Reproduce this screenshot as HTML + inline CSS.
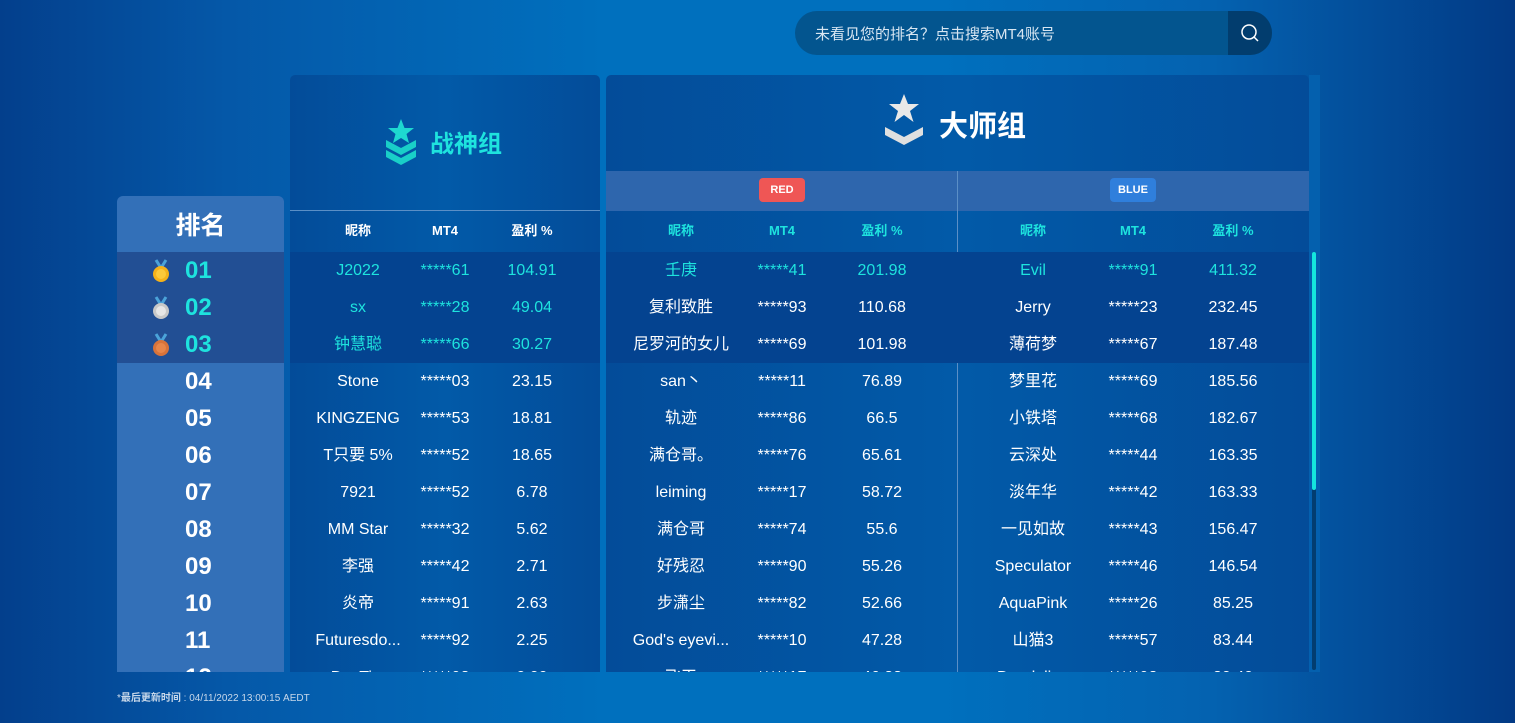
<!DOCTYPE html>
<html><head><meta charset="utf-8"><style>
*{margin:0;padding:0;box-sizing:border-box}
body{width:1515px;height:723px;overflow:hidden;position:relative;font-family:"Liberation Sans","Noto Sans CJK SC",sans-serif;color:#fff;
background:linear-gradient(90deg,#033f8c 0%,#0558a8 15%,#0070be 40%,#0070be 62%,#0462b0 80%,#023a85 100%)}
.abs{position:absolute}
.search{left:795px;top:11px;width:477px;height:44px;border-radius:22px;background:#03558f;overflow:hidden}
.search span{position:absolute;left:20px;top:12px;font-size:15px;color:#d8e6f2}
.search .btn{position:absolute;right:0;top:0;width:44px;height:44px;background:#023d6e}
.panel{background:linear-gradient(90deg,#034c99,#025aa8 50%,#034c99)}
.rank{left:117px;top:196px;width:167px;height:476px;background:#3370b8;border-radius:6px 6px 0 0;overflow:hidden}
.rank .h{height:56px;line-height:60px;text-align:center;font-size:25px;font-weight:bold}
.rank .r{height:37px;line-height:37px;font-size:24px;font-weight:bold;position:relative}
.rank .r b{position:absolute;left:68px}
.rank .top{background:#224f94;color:#1ee3de}
.rows{position:absolute;left:0;top:252px;right:0;height:420px;overflow:hidden}
.row{height:37px;position:relative;font-size:16px}
.row.top{background:#044390}
.row span{position:absolute;top:0;line-height:37px;transform:translateX(-50%);white-space:nowrap}
.t span{color:#1ee3de}
.hd{position:absolute;font-size:13px;font-weight:bold;transform:translateX(-50%);top:146px;height:20px;line-height:20px;white-space:nowrap}
.badge{position:absolute;top:179px;height:24px;line-height:24px;border-radius:4px;font-size:11px;font-weight:bold;text-align:center}
</style></head><body>
<div class="abs search"><span>未看见您的排名？点击搜索MT4账号</span><div class="btn"><svg width="44" height="44"><circle cx="21" cy="21" r="7" fill="none" stroke="#fff" stroke-width="1.5"/><line x1="26" y1="26" x2="30" y2="30" stroke="#fff" stroke-width="1.5"/></svg></div></div>

<div class="abs rank">
<div class="h">排名</div>
<div class="r top"><svg class="abs" style="left:33px;top:7px" width="22" height="26"><path d="M6 1l5 8 5-8" stroke="#4ba3d9" stroke-width="3" fill="none"/><circle cx="11" cy="15" r="8" fill="#f5b21a"/><circle cx="11" cy="15" r="5" fill="#fcc93a"/></svg><b>01</b></div>
<div class="r top"><svg class="abs" style="left:33px;top:7px" width="22" height="26"><path d="M6 1l5 8 5-8" stroke="#4ba3d9" stroke-width="3" fill="none"/><circle cx="11" cy="15" r="8" fill="#c8c8c8"/><circle cx="11" cy="15" r="5" fill="#e6e6e6"/></svg><b>02</b></div>
<div class="r top"><svg class="abs" style="left:33px;top:7px" width="22" height="26"><path d="M6 1l5 8 5-8" stroke="#4ba3d9" stroke-width="3" fill="none"/><circle cx="11" cy="15" r="8" fill="#d8733a"/><circle cx="11" cy="15" r="5" fill="#e8864a"/></svg><b>03</b></div>
<div class="r"><b>04</b></div><div class="r"><b>05</b></div><div class="r"><b>06</b></div><div class="r"><b>07</b></div><div class="r"><b>08</b></div><div class="r"><b>09</b></div><div class="r"><b>10</b></div><div class="r"><b>11</b></div><div class="r"><b>12</b></div>
</div>

<div class="abs panel" style="left:290px;top:75px;width:310px;height:597px;border-radius:5px 5px 0 0;overflow:hidden">
<svg class="abs" style="left:94px;top:43px" width="34" height="52"><polygon points="17,1 20.5,10 30,10 22.5,16 25,25 17,20 9,25 11.5,16 4,10 13.5,10" fill="#1ed8d0"/><path d="M2 22l15 8 15-8v7l-15 8-15-8z M2 32l15 8 15-8v7l-15 8-15-8z" fill="#19cfc8"/></svg>
<div class="abs" style="left:140px;top:54px;font-size:24px;line-height:32px;font-weight:bold;color:#1ee3de">战神组</div>
<div class="abs" style="left:0;top:135px;width:310px;height:1px;background:#5b8fc6"></div>
<div class="hd" style="left:68px">昵称</div><div class="hd" style="left:155px">MT4</div><div class="hd" style="left:242px">盈利 %</div>
<div class="rows" style="top:177px">
<div class="row top t"><span style="left:68px">J2022</span><span style="left:155px">*****61</span><span style="left:242px">104.91</span></div>
<div class="row top t"><span style="left:68px">sx</span><span style="left:155px">*****28</span><span style="left:242px">49.04</span></div>
<div class="row top t"><span style="left:68px">钟慧聪</span><span style="left:155px">*****66</span><span style="left:242px">30.27</span></div>
<div class="row"><span style="left:68px">Stone</span><span style="left:155px">*****03</span><span style="left:242px">23.15</span></div>
<div class="row"><span style="left:68px">KINGZENG</span><span style="left:155px">*****53</span><span style="left:242px">18.81</span></div>
<div class="row"><span style="left:68px">T只要 5%</span><span style="left:155px">*****52</span><span style="left:242px">18.65</span></div>
<div class="row"><span style="left:68px">7921</span><span style="left:155px">*****52</span><span style="left:242px">6.78</span></div>
<div class="row"><span style="left:68px">MM Star</span><span style="left:155px">*****32</span><span style="left:242px">5.62</span></div>
<div class="row"><span style="left:68px">李强</span><span style="left:155px">*****42</span><span style="left:242px">2.71</span></div>
<div class="row"><span style="left:68px">炎帝</span><span style="left:155px">*****91</span><span style="left:242px">2.63</span></div>
<div class="row"><span style="left:68px">Futuresdo...</span><span style="left:155px">*****92</span><span style="left:242px">2.25</span></div>
<div class="row"><span style="left:68px">DocTi...</span><span style="left:155px">*****98</span><span style="left:242px">0.00</span></div>
</div>
</div>

<div class="abs" style="left:1309px;top:75px;width:11px;height:597px;background:#0460ae"></div>
<div class="abs panel" style="left:606px;top:75px;width:703px;height:597px;border-radius:5px 5px 0 0;overflow:hidden">
<svg class="abs" style="left:278px;top:18px" width="40" height="54"><polygon points="20,1 24,11 35,11 26,18 29.5,29 20,22 10.5,29 14,18 5,11 16,11" fill="#e8e8e8"/><path d="M1 34l19 10 19-10v8l-19 10-19-10z" fill="#e0e0e0"/></svg>
<div class="abs" style="left:333px;top:28px;font-size:29px;font-weight:bold">大师组</div>
<div class="abs" style="left:0;top:96px;width:703px;height:40px;background:#2e66ad"></div>
<div class="abs" style="left:351px;top:96px;width:1px;height:501px;background:#5b8fc6"></div>
<div class="badge" style="left:153px;top:103px;width:46px;background:#ef5655">RED</div>
<div class="badge" style="left:504px;top:103px;width:46px;background:#2f7fdc">BLUE</div>
<div class="hd" style="left:75px;color:#1ee3de">昵称</div><div class="hd" style="left:176px;color:#1ee3de">MT4</div><div class="hd" style="left:276px;color:#1ee3de">盈利 %</div>
<div class="hd" style="left:427px;color:#1ee3de">昵称</div><div class="hd" style="left:527px;color:#1ee3de">MT4</div><div class="hd" style="left:627px;color:#1ee3de">盈利 %</div>
<div class="rows" style="top:177px;width:703px">
<div class="row top"><span style="left:75px;color:#1ee3de">壬庚</span><span style="left:176px;color:#1ee3de">*****41</span><span style="left:276px;color:#1ee3de">201.98</span><span style="left:427px;color:#1ee3de">Evil</span><span style="left:527px;color:#1ee3de">*****91</span><span style="left:627px;color:#1ee3de">411.32</span></div>
<div class="row top"><span style="left:75px">复利致胜</span><span style="left:176px">*****93</span><span style="left:276px">110.68</span><span style="left:427px">Jerry</span><span style="left:527px">*****23</span><span style="left:627px">232.45</span></div>
<div class="row top"><span style="left:75px">尼罗河的女儿</span><span style="left:176px">*****69</span><span style="left:276px">101.98</span><span style="left:427px">薄荷梦</span><span style="left:527px">*****67</span><span style="left:627px">187.48</span></div>
<div class="row"><span style="left:75px">san丶</span><span style="left:176px">*****11</span><span style="left:276px">76.89</span><span style="left:427px">梦里花</span><span style="left:527px">*****69</span><span style="left:627px">185.56</span></div>
<div class="row"><span style="left:75px">轨迹</span><span style="left:176px">*****86</span><span style="left:276px">66.5</span><span style="left:427px">小铁塔</span><span style="left:527px">*****68</span><span style="left:627px">182.67</span></div>
<div class="row"><span style="left:75px">满仓哥。</span><span style="left:176px">*****76</span><span style="left:276px">65.61</span><span style="left:427px">云深处</span><span style="left:527px">*****44</span><span style="left:627px">163.35</span></div>
<div class="row"><span style="left:75px">leiming</span><span style="left:176px">*****17</span><span style="left:276px">58.72</span><span style="left:427px">淡年华</span><span style="left:527px">*****42</span><span style="left:627px">163.33</span></div>
<div class="row"><span style="left:75px">满仓哥</span><span style="left:176px">*****74</span><span style="left:276px">55.6</span><span style="left:427px">一见如故</span><span style="left:527px">*****43</span><span style="left:627px">156.47</span></div>
<div class="row"><span style="left:75px">好残忍</span><span style="left:176px">*****90</span><span style="left:276px">55.26</span><span style="left:427px">Speculator</span><span style="left:527px">*****46</span><span style="left:627px">146.54</span></div>
<div class="row"><span style="left:75px">步潇尘</span><span style="left:176px">*****82</span><span style="left:276px">52.66</span><span style="left:427px">AquaPink</span><span style="left:527px">*****26</span><span style="left:627px">85.25</span></div>
<div class="row"><span style="left:75px">God's eyevi...</span><span style="left:176px">*****10</span><span style="left:276px">47.28</span><span style="left:427px">山猫3</span><span style="left:527px">*****57</span><span style="left:627px">83.44</span></div>
<div class="row"><span style="left:75px">飞天</span><span style="left:176px">*****17</span><span style="left:276px">46.88</span><span style="left:427px">Dandelion</span><span style="left:527px">*****98</span><span style="left:627px">80.40</span></div>
</div>
</div>
<div class="abs" style="left:1312px;top:252px;width:4px;height:418px;background:#023d70;border-radius:2px"></div>
<div class="abs" style="left:1312px;top:252px;width:4px;height:238px;background:#14e6de;border-radius:2px"></div>

<div class="abs" style="left:117px;top:689px;font-size:10px;color:#c8d8ea">*<b>最后更新时间</b> : 04/11/2022 13:00:15 AEDT</div>
</body></html>
